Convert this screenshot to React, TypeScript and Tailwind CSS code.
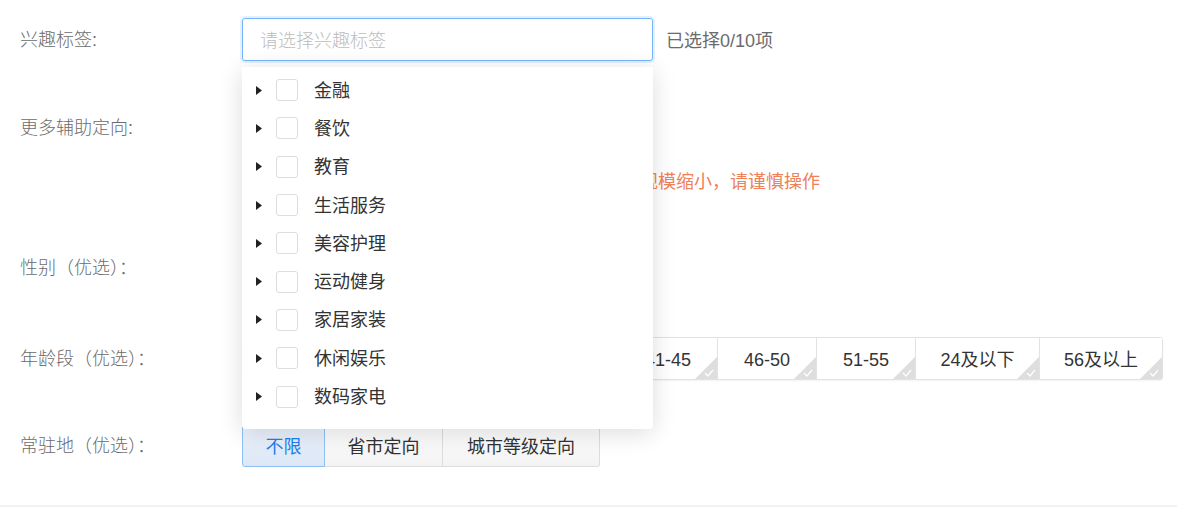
const font = { fontFamily: '"Liberation Sans", "Noto Sans CJK SC", "Noto Sans", sans-serif' };

const categories = ["金融", "餐饮", "教育", "生活服务", "美容护理", "运动健身", "家居家装", "休闲娱乐", "数码家电"];
const ages = [
  { t: "不限", w: "w-[78px]" },
  { t: "25-30", w: "w-[99px]" },
  { t: "31-35", w: "w-[99px]" },
  { t: "36-40", w: "w-[99px]" },
  { t: "41-45", w: "w-[99px]" },
  { t: "46-50", w: "w-[99px]" },
  { t: "51-55", w: "w-[99px]" },
  { t: "24及以下", w: "w-[124px]" },
  { t: "56及以上", w: "w-[123px]" },
];

const CornerCheck = () => (
  <svg className="absolute right-0 bottom-0" width="22" height="22" viewBox="0 0 22 22">
    <path d="M22 0 L22 22 L0 22 Z" fill="#dedede" />
    <path d="M10 16 L13 19 L18 13" stroke="#fff" strokeWidth="1.2" fill="none" />
  </svg>
);

const Label = ({ children }: { children: React.ReactNode }) => (
  <div className="w-[222px] h-[42px] shrink-0 pt-[3px] text-[18px] text-[#6b6b6b] font-light leading-[39px]">{children}</div>
);

const Dropdown = () => (
  <div className="absolute left-0 top-[49px] z-10 w-[411px] bg-white rounded-b-[4px] pt-[5px] pb-[12px] shadow-[0_4px_24px_rgba(0,0,0,0.14)]">
    {categories.map((c) => (
      <div key={c} className="flex items-center h-[38.3px]">
        <svg className="ml-[14px] -mt-[2px]" width="6" height="9" viewBox="0 0 6 9">
          <path d="M0 0 L6 4.5 L0 9 Z" fill="#222" />
        </svg>
        <span className="ml-[14px] -mt-[2px] w-[22px] h-[22px] border border-[#ddd] rounded-[3px] bg-white" />
        <span className="ml-[16px] text-[18px] text-[#333]">{c}</span>
      </div>
    ))}
  </div>
);

export default function App() {
  return (
    <div className="w-[1177px] h-[507px] bg-white border-b-2 border-[#f2f2f2] pl-[20px] overflow-hidden" style={font}>
      <div className="flex mt-[18px]">
        <Label>兴趣标签:</Label>
        <div className="relative">
          <div className="w-[411px] h-[43px] border border-[#74b4f7] rounded-[3px] shadow-[0_0_0_2px_rgba(120,180,245,0.2)] flex items-center pt-[3px] pl-[17px] text-[18px] text-[#bcbcbc] font-light">
            请选择兴趣标签
          </div>
          <Dropdown />
        </div>
        <div className="ml-[13px] pt-[3px] text-[18px] text-[#6b6b6b] leading-[40px]">已选择0/10项</div>
      </div>

      <div className="flex mt-[45px]">
        <Label>更多辅助定向:</Label>
        <div className="flex flex-col">
          <div className="h-[42px]" />
          <div className="mt-[22px] text-[18px] leading-[24px] text-[#ef8057] pl-[2px]">
            提示：辅助定向条件选择过多可能会导致覆盖人群规模缩小，请谨慎操作
          </div>
        </div>
      </div>

      <div className="flex mt-[52px]">
        <Label>性别（优选）：</Label>
        <div className="h-[42px]" />
      </div>

      <div className="flex mt-[49px]">
        <Label>年龄段（优选）：</Label>
        <div className="flex h-[43px] border border-[#e2e2e2] rounded-[3px] text-[18px] text-[#333] shadow-[0_1px_2px_rgba(0,0,0,0.05)]">
          {ages.map((a, i) => (
            <div
              key={a.t}
              className={`relative flex items-center justify-center pt-[3px] bg-white ${a.w} ${i > 0 ? "border-l border-[#e2e2e2]" : ""}`}
            >
              {a.t}
              <CornerCheck />
            </div>
          ))}
        </div>
      </div>

      <div className="flex mt-[44px]">
        <Label>常驻地（优选）：</Label>
        <div className="flex h-[43px] rounded-[3px] text-[18px] text-[#333]">
          <div className="w-[83px] flex items-center justify-center pt-[3px] border border-[#8fc0f5] rounded-l-[3px] bg-gradient-to-b from-[#eef4fd] to-[#dce7f6] text-[#1e7ff0]">
            不限
          </div>
          <div className="w-[118px] flex items-center justify-center pt-[3px] border-y border-r border-[#ddd] bg-gradient-to-b from-white to-[#f3f3f3]">
            省市定向
          </div>
          <div className="w-[157px] flex items-center justify-center pt-[3px] border-y border-r border-[#ddd] rounded-r-[3px] bg-gradient-to-b from-white to-[#f3f3f3]">
            城市等级定向
          </div>
        </div>
      </div>
    </div>
  );
}
